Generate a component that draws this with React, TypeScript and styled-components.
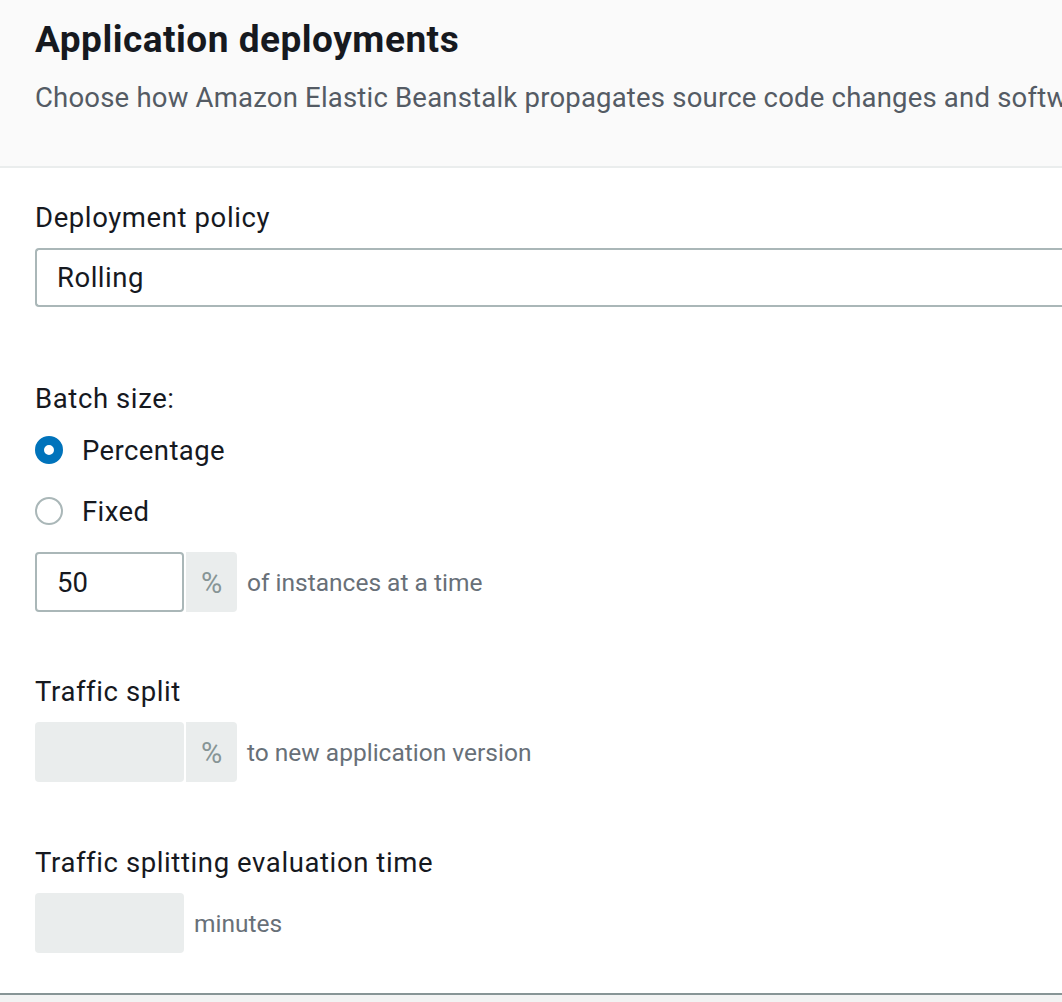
import React from "react";
import styled, { createGlobalStyle } from "styled-components";

const Global = createGlobalStyle`
  html, body { margin: 0; padding: 0; background: #ffffff; }
  body { font-family: Roboto, "Open Sans", Arial, sans-serif; color: #16191f; }
  * { box-sizing: border-box; }
`;

const Page = styled.div`
  width: 1062px;
  height: 1002px;
  overflow: hidden;
  display: flex;
  flex-direction: column;
  background: #f2f3f3;
`;

const Panel = styled.section`
  background: #ffffff;
  border-bottom: 2px solid #879596;
  display: flex;
  flex-direction: column;
`;

const Header = styled.header`
  background: #fafafa;
  border-bottom: 2px solid #eaeded;
  padding: 18px 0 48px 35px;
  white-space: nowrap;
  overflow: hidden;
`;

const Title = styled.h2`
  margin: 0;
  font-size: 37px;
  line-height: 44px;
  font-weight: 700;
  color: #16191f;
  letter-spacing: 0.5px;
`;

const Description = styled.p`
  margin: 16px 0 0;
  font-size: 27.5px;
  line-height: 40px;
  color: #545b64;
  letter-spacing: 0.2px;
`;

const Body = styled.div`
  padding: 30px 0 40px 35px;
  display: flex;
  flex-direction: column;
`;

const Field = styled.div<{ $gap?: number }>`
  display: flex;
  flex-direction: column;
  margin-top: ${(p) => p.$gap ?? 0}px;
`;

const Label = styled.label<{ $tight?: boolean }>`
  font-size: 27.5px;
  line-height: 40px;
  color: #16191f;
  letter-spacing: 0.6px;
  margin-bottom: ${(p) => (p.$tight ? 0 : 10)}px;
`;

const Select = styled.div`
  height: 59px;
  margin-right: -8px;
  border: 2px solid #aab7b8;
  border-right: none;
  border-radius: 4px 0 0 4px;
  display: flex;
  align-items: center;
  padding-left: 20px;
  font-size: 27.5px;
  letter-spacing: 0.5px;
  color: #16191f;
`;

const RadioGroup = styled.div`
  display: flex;
  flex-direction: column;
  gap: 21px;
  margin-top: 11px;
`;

const RadioRow = styled.div`
  display: flex;
  align-items: center;
  gap: 19px;
  height: 40px;
  font-size: 27.5px;
  letter-spacing: 0.4px;
  color: #16191f;
`;

const RadioDot = styled.span<{ $checked?: boolean }>`
  width: 28px;
  height: 28px;
  border-radius: 50%;
  flex: none;
  border: ${(p) => (p.$checked ? "9px solid #0073bb" : "2px solid #aab7b8")};
  background: #ffffff;
`;

const InputRow = styled.div<{ $top?: number }>`
  display: flex;
  align-items: center;
  margin-top: ${(p) => p.$top ?? 0}px;
`;

const Input = styled.div<{ $disabled?: boolean }>`
  width: 149px;
  height: 60px;
  border-radius: 4px;
  border: ${(p) => (p.$disabled ? "none" : "2px solid #aab7b8")};
  background: ${(p) => (p.$disabled ? "#eaeded" : "#ffffff")};
  display: flex;
  align-items: center;
  padding-left: 20px;
  font-size: 27.5px;
  color: #16191f;
`;

const Addon = styled.div`
  width: 51px;
  height: 60px;
  margin-left: 2px;
  border-radius: 0 4px 4px 0;
  background: #eaeded;
  display: flex;
  align-items: center;
  justify-content: center;
  padding-top: 2px;
  font-size: 29px;
  color: #879596;
`;

const Hint = styled.span<{ $left?: number }>`
  margin-left: ${(p) => p.$left ?? 10}px;
  font-size: 24.5px;
  color: #687078;
`;

const Rest = styled.div`
  flex: 1;
  background: #f2f3f3;
`;

export default function App() {
  return (
    <Page>
      <Global />
      <Panel>
        <Header>
          <Title>Application deployments</Title>
          <Description>
            Choose how Amazon Elastic Beanstalk propagates source code changes and software configuration updates.
          </Description>
        </Header>
        <Body>
          <Field>
            <Label>Deployment policy</Label>
            <Select>Rolling</Select>
          </Field>

          <Field $gap={72}>
            <Label as="div" $tight>Batch size:</Label>
            <RadioGroup>
              <RadioRow>
                <RadioDot $checked />
                Percentage
              </RadioRow>
              <RadioRow>
                <RadioDot />
                Fixed
              </RadioRow>
            </RadioGroup>
            <InputRow $top={21}>
              <Input>50</Input>
              <Addon>%</Addon>
              <Hint>of instances at a time</Hint>
            </InputRow>
          </Field>

          <Field $gap={60}>
            <Label>Traffic split</Label>
            <InputRow>
              <Input $disabled />
              <Addon>%</Addon>
              <Hint>to new application version</Hint>
            </InputRow>
          </Field>

          <Field $gap={61}>
            <Label>Traffic splitting evaluation time</Label>
            <InputRow>
              <Input $disabled />
              <Hint $left={10}>minutes</Hint>
            </InputRow>
          </Field>
        </Body>
      </Panel>
      <Rest />
    </Page>
  );
}
